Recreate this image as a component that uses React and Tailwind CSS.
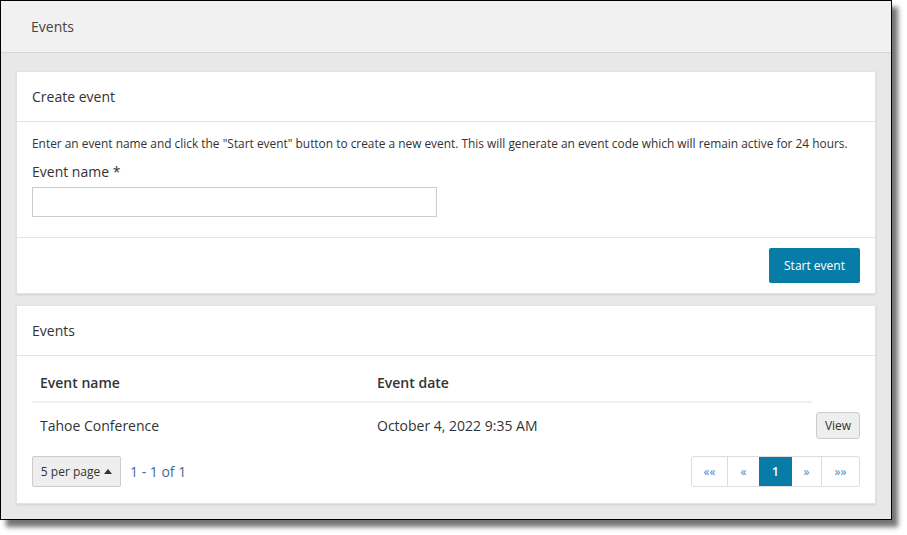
import React from "react";

const font = { fontFamily: '"Open Sans", "Noto Sans", sans-serif' };

function Caret() {
  return (
    <svg width="8" height="5" viewBox="0 0 8 5" className="ml-[4px] inline-block">
      <path d="M0 5 L4 0 L8 5 Z" fill="#333" />
    </svg>
  );
}

export default function App() {
  return (
    <div className="w-[907px] h-[535px] bg-white" style={font}>
      <div className="w-[892px] h-[520px] border border-black shadow-[6px_7px_5px_rgba(0,0,0,0.55)] bg-[#e8e8e8] flex flex-col">
        <div className="h-[52px] shrink-0 bg-[#f1f1f1] border-b border-[#d6d6d6] flex items-center px-[30px] text-[14px] text-[#444]">
          Events
        </div>
        <div className="flex-1 pt-[18px] pl-[15px] pr-[15px] flex flex-col gap-[11px]">
          {/* Create event card */}
          <div className="bg-white border border-[#e2e2e2] shadow-[0_1px_2px_rgba(0,0,0,0.10)] flex flex-col">
            <div className="h-[50px] border-b border-[#e4e4e4] flex items-center px-[15px] text-[14px] text-[#333]">
              Create event
            </div>
            <div className="px-[15px] pt-[12px] pb-[20px] border-b border-[#e4e4e4]">
              <div className="text-[11.9px] leading-[18px] text-[#333]">
                Enter an event name and click the "Start event" button to create a new event. This will generate an event code which will remain active for 24 hours.
              </div>
              <div className="mt-[10px] text-[14px] leading-[20px] font-medium text-[#333]">
                Event name *
              </div>
              <input
                className="mt-[5px] block w-[405px] h-[30px] border border-[#cccccc] bg-white outline-none"
                type="text"
              />
            </div>
            <div className="flex justify-end px-[15px] py-[10px]">
              <button className="w-[91px] h-[35px] bg-[#077ca6] rounded-[2px] text-white text-[12px]">
                Start event
              </button>
            </div>
          </div>

          {/* Events card */}
          <div className="bg-white border border-[#e2e2e2] shadow-[0_1px_2px_rgba(0,0,0,0.10)] flex flex-col">
            <div className="h-[50px] border-b border-[#e4e4e4] flex items-center px-[15px] text-[14px] text-[#333]">
              Events
            </div>
            <div className="px-[15px] pt-[17px] pb-[16px]">
              <div className="flex">
                <div className="w-[780px] flex border-b-2 border-[#efefef] pb-[8px] text-[14px] leading-[20px] font-semibold text-[#333]">
                  <div className="w-[337px] pl-[8px]">Event name</div>
                  <div className="flex-1 pl-[8px]">Event date</div>
                </div>
              </div>
              <div className="flex items-center py-[9px] text-[14px] text-[#333]">
                <div className="w-[337px] pl-[8px]">Tahoe Conference</div>
                <div className="w-[443px] pl-[8px]">October 4, 2022 9:35 AM</div>
                <div className="flex-1 flex justify-end">
                  <button className="w-[44px] h-[27px] bg-[#eeeeee] border border-[#cccccc] rounded-[3px] text-[12px] text-[#333]">
                    View
                  </button>
                </div>
              </div>
              <div className="mt-[8px] flex items-center justify-between">
                <div className="flex items-center">
                  <button className="h-[31px] w-[89px] flex items-center justify-center bg-[#eeeeee] border border-[#cccccc] rounded-[2px] text-[12px] text-[#333]">
                    5 per page
                    <Caret />
                  </button>
                  <span className="ml-[9px] text-[14px] text-[#3f6d9a]">1 - 1 of 1</span>
                </div>
                <div className="flex h-[31px] border border-[#dddddd] rounded-[3px] text-[12px]">
                  <span className="w-[36px] flex items-center justify-center text-[#4f86c6] border-r border-[#dddddd]">««</span>
                  <span className="w-[31px] flex items-center justify-center text-[#4f86c6]">«</span>
                  <span className="w-[33px] flex items-center justify-center bg-[#077ca6] text-white font-semibold">1</span>
                  <span className="w-[30px] flex items-center justify-center text-[#4f86c6] border-r border-[#dddddd]">»</span>
                  <span className="w-[37px] flex items-center justify-center text-[#4f86c6]">»»</span>
                </div>
              </div>
            </div>
          </div>
        </div>
      </div>
    </div>
  );
}
